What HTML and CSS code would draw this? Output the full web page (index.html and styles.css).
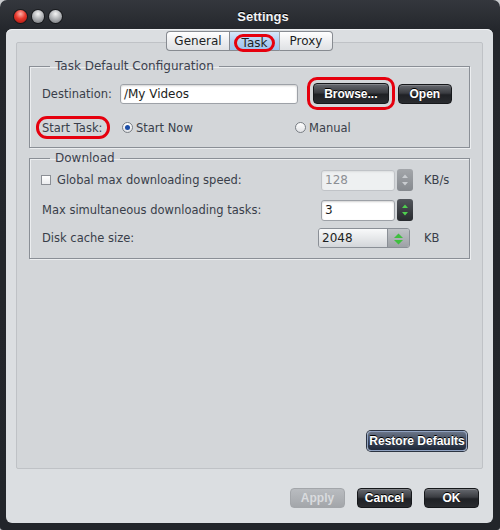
FILE: index.html
```html
<!DOCTYPE html>
<html>
<head>
<meta charset="utf-8">
<title>Settings</title>
<link rel="stylesheet" href="styles.css">
</head>
<body>
<div class="window">
  <div class="titlebar">
    <div class="lights">
      <span class="light red"></span>
      <span class="light gray"></span>
      <span class="light gray"></span>
    </div>
    <div class="title">Settings</div>
  </div>
  <div class="sheet">
    <div class="tabs">
      <span class="tab tab-general">General</span>
      <span class="tab tab-task active"><span class="ring ring-tab">Task</span></span>
      <span class="tab tab-proxy">Proxy</span>
    </div>
    <div class="panel">
      <fieldset class="group group-task">
        <legend>Task Default Configuration</legend>
        <div class="row row-dest">
          <span class="label">Destination:</span>
          <span class="field field-dest">/My Videos</span>
          <span class="ring ring-btn"><button class="btn btn-dark btn-browse">Browse...</button></span>
          <button class="btn btn-dark btn-open">Open</button>
        </div>
        <div class="row row-start">
          <span class="ring ring-label label">Start Task:</span>
          <span class="option option-now"><span class="radio checked"></span>Start Now</span>
          <span class="option"><span class="radio"></span>Manual</span>
        </div>
      </fieldset>
      <fieldset class="group group-download">
        <legend>Download</legend>
        <div class="row row-speed">
          <span class="label label-wide"><span class="check"></span>Global max downloading speed:</span>
          <span class="control">
            <span class="field field-num disabled">128</span>
            <span class="stepper stepper-gray">
              <svg width="16" height="22" viewBox="0 0 16 22"><path d="M5 9 L8 5.5 L11 9 Z" fill="#c9ccd0"/><path d="M5 13 L8 16.5 L11 13 Z" fill="#c9ccd0"/></svg>
            </span>
          </span>
          <span class="unit">KB/s</span>
        </div>
        <div class="row row-tasks">
          <span class="label label-wide">Max simultaneous downloading tasks:</span>
          <span class="control">
            <span class="field field-num">3</span>
            <span class="stepper stepper-dark">
              <svg width="16" height="22" viewBox="0 0 16 22"><path d="M5 9 L8 5.5 L11 9 Z" fill="#4fcf4f"/><path d="M5 13 L8 16.5 L11 13 Z" fill="#4fcf4f"/></svg>
            </span>
          </span>
        </div>
        <div class="row row-cache">
          <span class="label label-wide">Disk cache size:</span>
          <span class="control">
            <span class="select">
              <span class="select-value">2048</span>
              <span class="select-arrows">
                <svg width="21" height="20" viewBox="0 0 21 20"><path d="M6 9 L10.5 4.5 L15 9 Z" fill="#3fbf3f"/><path d="M6 11 L10.5 15.5 L15 11 Z" fill="#3fbf3f"/></svg>
              </span>
            </span>
          </span>
          <span class="unit">KB</span>
        </div>
      </fieldset>
      <div class="restore-row">
        <button class="btn btn-blue">Restore Defaults</button>
      </div>
    </div>
    <div class="footer">
      <button class="btn btn-disabled">Apply</button>
      <button class="btn btn-dark">Cancel</button>
      <button class="btn btn-dark">OK</button>
    </div>
  </div>
</div>
</body>
</html>
```
FILE: styles.css
```css
html, body {
  margin: 0;
  padding: 0;
  background: #c9cbce;
}
body {
  font-family: "DejaVu Sans", sans-serif;
  font-size: 11.5px;
  color: #393e4a;
}
.window {
  width: 500px;
  height: 530px;
  background: linear-gradient(#34373d, #24272c 30px, #22252a);
  border-radius: 7px 7px 3px 3px;
  display: flex;
  flex-direction: column;
  overflow: hidden;
}
.titlebar {
  height: 29px;
  display: flex;
  align-items: center;
  flex-shrink: 0;
}
.lights {
  display: flex;
  gap: 5px;
  padding-left: 14px;
  width: 48px;
  margin-top: 3px;
}
.light {
  width: 13px;
  height: 13px;
  border-radius: 50%;
  box-shadow: 0 0 0 1px rgba(0,0,0,.45);
}
.light.red {
  background: radial-gradient(circle at 50% 30%, #ffb0a8 0, #e8382c 45%, #a0120c 100%);
}
.light.gray {
  background: radial-gradient(circle at 50% 30%, #f4f4f4 0, #b4b6b9 45%, #6c6f73 100%);
}
.title {
  flex: 1;
  text-align: center;
  padding-right: 36px;
  margin-top: 4px;
  font-family: "Liberation Sans", Arial, sans-serif;
  font-weight: bold;
  font-size: 13px;
  color: #f2f3f5;
  text-shadow: 0 -1px 0 #000;
}
.sheet {
  flex: 1;
  margin: 0 7px 7px 6px;
  background: #dbdee1;
  border-radius: 6px;
  display: flex;
  flex-direction: column;
  box-shadow: inset 0 1px 0 #eef0f2;
}
.tabs {
  margin-top: 2px;
  height: 20px;
  display: flex;
  justify-content: center;
  position: relative;
  z-index: 1;
}
.tab {
  height: 18px;
  border: 1px solid #878b91;
  background: linear-gradient(#ffffff, #eeeff1 50%, #dfe1e4);
  display: flex;
  align-items: center;
  justify-content: center;
  font-size: 12px;
  color: #1d1f24;
  box-sizing: content-box;
}
.tab-general {
  width: 62px;
  border-radius: 4px 0 0 4px;
  border-right: none;
}
.tab-task {
  width: 49px;
  border-right: 1px solid #a2a6ab;
}
.tab-proxy {
  width: 52px;
  border-radius: 0 4px 4px 0;
  border-left: none;
}
.tab.active {
  background: linear-gradient(#d8e8fa, #b3d0f2 50%, #9cc2ee);
}
.ring {
  border: 3px solid #e6000e;
  border-radius: 10px;
  display: inline-flex;
  align-items: center;
  box-sizing: border-box;
}
.ring-tab {
  height: 18px;
  width: 41px;
  justify-content: center;
  margin-top: 3px;
  border-radius: 9px;
}
.panel {
  margin: -9px 10px 0 10px;
  height: 427px;
  box-sizing: border-box;
  background: #d3d6d9;
  border: 1px solid #bfc2c6;
  border-radius: 2px;
  display: flex;
  flex-direction: column;
}
.group {
  margin: 0 12px;
  padding: 0 0 0 12px;
  border: 1px solid #8a8f96;
  box-shadow: 1px 1px 0 #eceef0, inset 1px 1px 0 #eceef0;
  min-width: 0;
}
.group legend {
  margin-left: 8px;
  padding: 0 5px 0 5px;
  line-height: 14px;
  font-size: 12px;
  color: #3c414d;
}
.group-task {
  margin-top: 16px;
  padding-bottom: 8px;
}
.group-download {
  margin-top: 3px;
  padding-bottom: 9px;
}
.row {
  display: flex;
  align-items: center;
}
.row-dest {
  margin-top: 4px;
  height: 33px;
}
.label {
  white-space: nowrap;
}
.field {
  box-sizing: border-box;
  height: 20px;
  border: 1px solid #9da1a7;
  border-radius: 3px;
  background: #ffffff;
  box-shadow: inset 0 1px 2px rgba(0,0,0,.18);
  font-size: 12px;
  color: #1c1e22;
  display: flex;
  align-items: center;
  padding-left: 3px;
}
.field-dest {
  width: 178px;
  margin-left: 8px;
}
.ring-btn {
  margin-left: 9px;
  padding: 3px;
  width: 88px;
  height: 33px;
}
.btn {
  font-family: "Liberation Sans", Arial, sans-serif;
  font-weight: bold;
  font-size: 12px;
  border-radius: 4px;
  padding: 0;
  box-sizing: border-box;
  color: #ffffff;
  display: inline-flex;
  align-items: center;
  justify-content: center;
}
.btn-dark {
  background: linear-gradient(#66696f, #3a3c41 45%, #1f2125 55%, #2a2c30);
  border: 1px solid #16181b;
  box-shadow: inset 0 1px 0 rgba(255,255,255,.2);
  text-shadow: 0 -1px 0 #000;
}
.btn-browse {
  width: 76px;
  height: 21px;
}
.btn-open {
  width: 54px;
  height: 20px;
  margin-left: 3px;
}
.row-start {
  margin-top: 6px;
  height: 23px;
}
.ring-label {
  height: 23px;
  margin-left: -6px;
  padding: 0 4px 0 3px;
  border-radius: 11px;
  width: 74px;
}
.option {
  display: inline-flex;
  align-items: center;
  gap: 3px;
  white-space: nowrap;
}
.option-now {
  margin-left: 12px;
  width: 173px;
}
.radio {
  width: 11px;
  height: 11px;
  box-sizing: border-box;
  border-radius: 50%;
  border: 1px solid #797e84;
  background: linear-gradient(#ffffff, #e0e2e5);
  display: inline-flex;
  align-items: center;
  justify-content: center;
}
.radio.checked::after {
  content: "";
  width: 5px;
  height: 5px;
  border-radius: 50%;
  background: #1c4ea8;
}
.label-wide {
  width: 276px;
  display: inline-flex;
  align-items: center;
}
.check {
  width: 10px;
  height: 10px;
  box-sizing: border-box;
  border: 1px solid #8b8f95;
  background: linear-gradient(#ffffff, #ebecee);
  margin-left: -1px;
  margin-right: 6px;
}
.control {
  width: 106px;
  display: flex;
  align-items: center;
}
.field-num {
  width: 74px;
  margin-left: 3px;
  height: 21px;
}
.field-num.disabled {
  background: #eef0f1;
  color: #8c8f94;
  box-shadow: inset 0 1px 2px rgba(0,0,0,.08);
  border-color: #c0c3c7;
}
.stepper {
  width: 16px;
  height: 22px;
  border-radius: 3px;
  margin-left: 2px;
  display: flex;
}
.stepper-gray {
  background: linear-gradient(#a3a6aa, #85898e);
}
.stepper-dark {
  background: linear-gradient(#52565c, #272a2e);
}
.unit {
  white-space: nowrap;
}
.row-speed {
  margin-top: 4px;
  height: 22px;
}
.row-tasks {
  margin-top: 8px;
  height: 22px;
}
.row-cache {
  margin-top: 6px;
  height: 22px;
}
.select {
  width: 92px;
  height: 20px;
  box-sizing: border-box;
  border: 1px solid #8a8f96;
  border-radius: 3px;
  display: flex;
  overflow: hidden;
}
.select-value {
  flex: 1;
  background: linear-gradient(#f8f9fa, #e6e8ea 50%, #d3d6da);
  font-size: 12px;
  color: #1c1e22;
  display: flex;
  align-items: center;
  padding-left: 3px;
}
.select-arrows {
  width: 21px;
  background: linear-gradient(#c0c3c7, #9da1a6);
  border-left: 1px solid #8a8f96;
  display: flex;
}
.restore-row {
  margin-top: auto;
  margin-bottom: 17px;
  padding-right: 15px;
  display: flex;
  justify-content: flex-end;
}
.btn-blue {
  width: 100px;
  height: 20px;
  background: linear-gradient(#6a7588, #3d4759 50%, #1f2839);
  border: 1px solid #8fa1c0;
  box-shadow: 0 0 0 1px #2c3442;
  text-shadow: 0 -1px 0 #000;
}
.footer {
  margin-top: 19px;
  padding-right: 14px;
  display: flex;
  justify-content: flex-end;
  gap: 12px;
}
.footer .btn {
  width: 55px;
  height: 20px;
}
.btn-disabled {
  background: linear-gradient(#b9bcc0, #a3a6aa);
  border: 1px solid #a3a6aa;
  color: #d9dbde;
}
```
